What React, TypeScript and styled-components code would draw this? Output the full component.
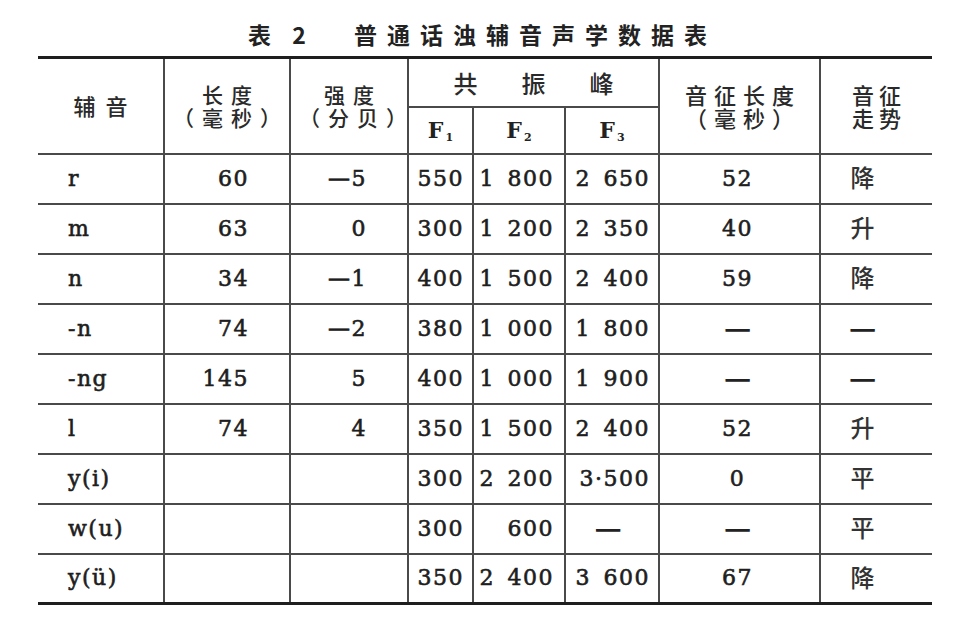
import styled, { createGlobalStyle } from 'styled-components'

const GlobalStyle = createGlobalStyle`
  html, body {
    margin: 0;
    padding: 0;
    background: #ffffff;
  }
`

const Page = styled.main`
  width: 969px;
  height: 624px;
  padding-top: 20px;
  box-sizing: border-box;
  background: #ffffff;
  color: #1c1c1c;
  font-family: 'DejaVu Serif', 'Noto Sans CJK SC', serif;
`

const Caption = styled.h1`
  display: flex;
  justify-content: center;
  align-items: center;
  gap: 40px;
  margin: 0 0 8px;
  padding-right: 4px;
  height: 28px;
  font-family: 'Noto Sans CJK SC', sans-serif;
  font-size: 23px;
  font-weight: 700;
  color: #222;
`

const CaptionNo = styled.span`
  letter-spacing: 8px;
`

const CaptionText = styled.span`
  letter-spacing: 10px;
`

const Table = styled.table`
  margin-left: 38px;
  width: 894px;
  table-layout: fixed;
  border-collapse: collapse;
  border-top: 3px solid #1e1e1e;
  border-bottom: 3px solid #1e1e1e;
`

const HeadRow = styled.tr<{ $h: number }>`
  height: ${({ $h }) => $h}px;
`

const HeadCell = styled.th<{ $ls?: number; $fs?: number }>`
  padding: 0 0 0 ${({ $ls }) => $ls ?? 6}px;
  border: 2px solid #4a4a4a;
  border-top: none;
  font-family: 'Noto Sans CJK SC', sans-serif;
  font-size: ${({ $fs }) => $fs ?? 21}px;
  font-weight: 500;
  line-height: 23px;
  color: #2a2a2a;
  letter-spacing: ${({ $ls }) => $ls ?? 6}px;
  text-align: center;
  vertical-align: middle;
  white-space: nowrap;

  &:first-child { border-left: none; }
  &:last-child { border-right: none; }
`

const FormantCell = styled.th`
  padding: 0;
  border: 2px solid #4a4a4a;
  border-top: none;
  font-family: 'DejaVu Serif', serif;
  font-size: 22px;
  font-weight: 700;
  line-height: 24px;
  color: #222;
  text-align: center;
  vertical-align: middle;

  sub {
    font-size: 11px;
    line-height: 0;
    vertical-align: -3px;
    margin-left: 2px;
  }
`

const Row = styled.tr`
  height: 50px;
`

const Cell = styled.td<{ $align?: 'left' | 'right' | 'center'; $pl?: number; $pr?: number }>`
  padding: 0 ${({ $pr }) => $pr ?? 0}px 0 ${({ $pl }) => $pl ?? 0}px;
  border: 2px solid #4a4a4a;
  text-align: ${({ $align }) => $align ?? 'right'};
  vertical-align: middle;
  font-size: 22px;
  font-weight: 400;
  line-height: 26px;
  letter-spacing: 1.5px;
  -webkit-text-stroke: 0.6px #1e1e1e;
  white-space: nowrap;
  color: #1e1e1e;

  &:first-child { border-left: none; }
  &:last-child { border-right: none; }
`

const Trend = styled.span`
  font-family: 'Noto Sans CJK SC', sans-serif;
  font-size: 24px;
  font-weight: 500;
  letter-spacing: 0;
  -webkit-text-stroke: 0;
  color: #333;
`

const Dash = styled.span`
  font-family: 'Noto Sans CJK SC', sans-serif;
  font-size: 30px;
  font-weight: 700;
  letter-spacing: 0;
  -webkit-text-stroke: 0;
  color: #222;
`

type Consonant = {
  name: string
  length: string
  strength: string
  f1: string
  f2: string
  f3: string
  cueLength: string
  trend: string
}

// en space between thousands, as in the printed table
const rows: Consonant[] = [
  { name: 'r', length: '60', strength: '—5', f1: '550', f2: '1\u2002800', f3: '2\u2002650', cueLength: '52', trend: '降' },
  { name: 'm', length: '63', strength: '0', f1: '300', f2: '1\u2002200', f3: '2\u2002350', cueLength: '40', trend: '升' },
  { name: 'n', length: '34', strength: '—1', f1: '400', f2: '1\u2002500', f3: '2\u2002400', cueLength: '59', trend: '降' },
  { name: '-n', length: '74', strength: '—2', f1: '380', f2: '1\u2002000', f3: '1\u2002800', cueLength: '—', trend: '—' },
  { name: '-ng', length: '145', strength: '5', f1: '400', f2: '1\u2002000', f3: '1\u2002900', cueLength: '—', trend: '—' },
  { name: 'l', length: '74', strength: '4', f1: '350', f2: '1\u2002500', f3: '2\u2002400', cueLength: '52', trend: '升' },
  { name: 'y(i)', length: '', strength: '', f1: '300', f2: '2\u2002200', f3: '3·500', cueLength: '0', trend: '平' },
  { name: 'w(u)', length: '', strength: '', f1: '300', f2: '600', f3: '—', cueLength: '—', trend: '平' },
  { name: 'y(ü)', length: '', strength: '', f1: '350', f2: '2\u2002400', f3: '3\u2002600', cueLength: '67', trend: '降' },
]

function Value({ v }: { v: string }) {
  if (v === '—') return <Dash>—</Dash>
  return <>{v}</>
}

export default function App() {
  return (
    <Page>
      <GlobalStyle />
      <Caption>
        <CaptionNo>表 2</CaptionNo>
        <CaptionText>普通话浊辅音声学数据表</CaptionText>
      </Caption>

      <Table>
        <colgroup>
          <col style={{ width: 126 }} />
          <col style={{ width: 126 }} />
          <col style={{ width: 118 }} />
          <col style={{ width: 65 }} />
          <col style={{ width: 92 }} />
          <col style={{ width: 94 }} />
          <col style={{ width: 161 }} />
          <col style={{ width: 112 }} />
        </colgroup>
        <thead>
          <HeadRow $h={49}>
            <HeadCell rowSpan={2} $ls={10} $fs={22}>辅音</HeadCell>
            <HeadCell rowSpan={2} $ls={8}>长度<br />（毫秒）</HeadCell>
            <HeadCell rowSpan={2} $ls={8}>强度<br />（分贝）</HeadCell>
            <HeadCell colSpan={3} $ls={44} $fs={24}>共振峰</HeadCell>
            <HeadCell rowSpan={2} $ls={7} $fs={22}>音征长度<br />（毫秒）</HeadCell>
            <HeadCell rowSpan={2} $ls={5} $fs={22}>音征<br />走势</HeadCell>
          </HeadRow>
          <HeadRow $h={47}>
            <FormantCell>F<sub>1</sub></FormantCell>
            <FormantCell>F<sub>2</sub></FormantCell>
            <FormantCell>F<sub>3</sub></FormantCell>
          </HeadRow>
        </thead>
        <tbody>
          {rows.map((r) => (
            <Row key={r.name}>
              <Cell $align="left" $pl={30}>{r.name}</Cell>
              <Cell $pr={40}>{r.length}</Cell>
              <Cell $pr={40}>{r.strength}</Cell>
              <Cell $pr={8}>{r.f1}</Cell>
              <Cell $pr={10}>{r.f2}</Cell>
              <Cell $align={r.f3 === '—' ? 'center' : 'right'} $pr={8}><Value v={r.f3} /></Cell>
              <Cell $align="center" $pr={4}><Value v={r.cueLength} /></Cell>
              <Cell $align="center" $pr={28}>
                {r.trend === '—' ? <Dash>—</Dash> : <Trend>{r.trend}</Trend>}
              </Cell>
            </Row>
          ))}
        </tbody>
      </Table>
    </Page>
  )
}
